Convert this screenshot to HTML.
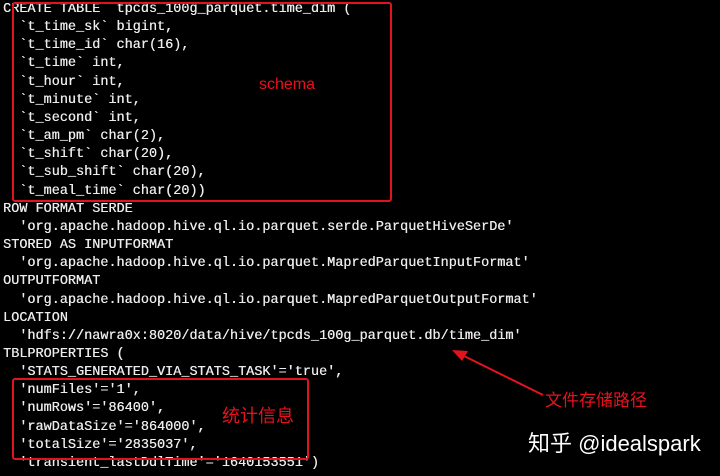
<!DOCTYPE html>
<html><head><meta charset="utf-8"><style>
body{margin:0;width:720px;height:476px;background:#000;overflow:hidden;position:relative}
pre{position:absolute;left:3px;top:1px;margin:0;font-family:"Liberation Mono",monospace;font-size:13.5px;line-height:18.15px;color:#ececec;white-space:pre;text-shadow:0.3px 0 0 #ececec}
.box{position:absolute;border:2px solid #e0141c;border-radius:3px}
.lbl{position:absolute;color:#e8121c;font-family:"Liberation Sans","Noto Sans CJK SC",sans-serif}
.wm{position:absolute;left:528px;top:426px;color:#fff;font-size:22px;font-family:"Liberation Sans","Noto Sans CJK SC",sans-serif}
</style></head><body>
<pre>CREATE TABLE `tpcds_100g_parquet.time_dim`(
  `t_time_sk` bigint,
  `t_time_id` char(16),
  `t_time` int,
  `t_hour` int,
  `t_minute` int,
  `t_second` int,
  `t_am_pm` char(2),
  `t_shift` char(20),
  `t_sub_shift` char(20),
  `t_meal_time` char(20))
ROW FORMAT SERDE
  'org.apache.hadoop.hive.ql.io.parquet.serde.ParquetHiveSerDe'
STORED AS INPUTFORMAT
  'org.apache.hadoop.hive.ql.io.parquet.MapredParquetInputFormat'
OUTPUTFORMAT
  'org.apache.hadoop.hive.ql.io.parquet.MapredParquetOutputFormat'
LOCATION
  'hdfs://nawra0x:8020/data/hive/tpcds_100g_parquet.db/time_dim'
TBLPROPERTIES (
  'STATS_GENERATED_VIA_STATS_TASK'='true',
  'numFiles'='1',
  'numRows'='86400',
  'rawDataSize'='864000',
  'totalSize'='2835037',
  'transient_lastDdlTime'='1640153551')</pre>
<div class="box" style="left:12px;top:2px;width:376px;height:196px"></div>
<div class="box" style="left:12px;top:378px;width:293px;height:78px"></div>
<div class="lbl" style="left:259px;top:76px;font-size:16px">schema</div>
<div class="lbl" style="left:545px;top:386px;font-size:17px">文件存储路径</div>
<div class="lbl" style="left:222px;top:402px;font-size:18px">统计信息</div>
<svg style="position:absolute;left:0;top:0" width="720" height="476">
<line x1="543" y1="395" x2="460" y2="354" stroke="#e0141c" stroke-width="2"/>
<polygon points="452,350 468,351 462,361" fill="#e0141c"/>
</svg>
<div class="wm">知乎 @idealspark</div>
</body></html>
